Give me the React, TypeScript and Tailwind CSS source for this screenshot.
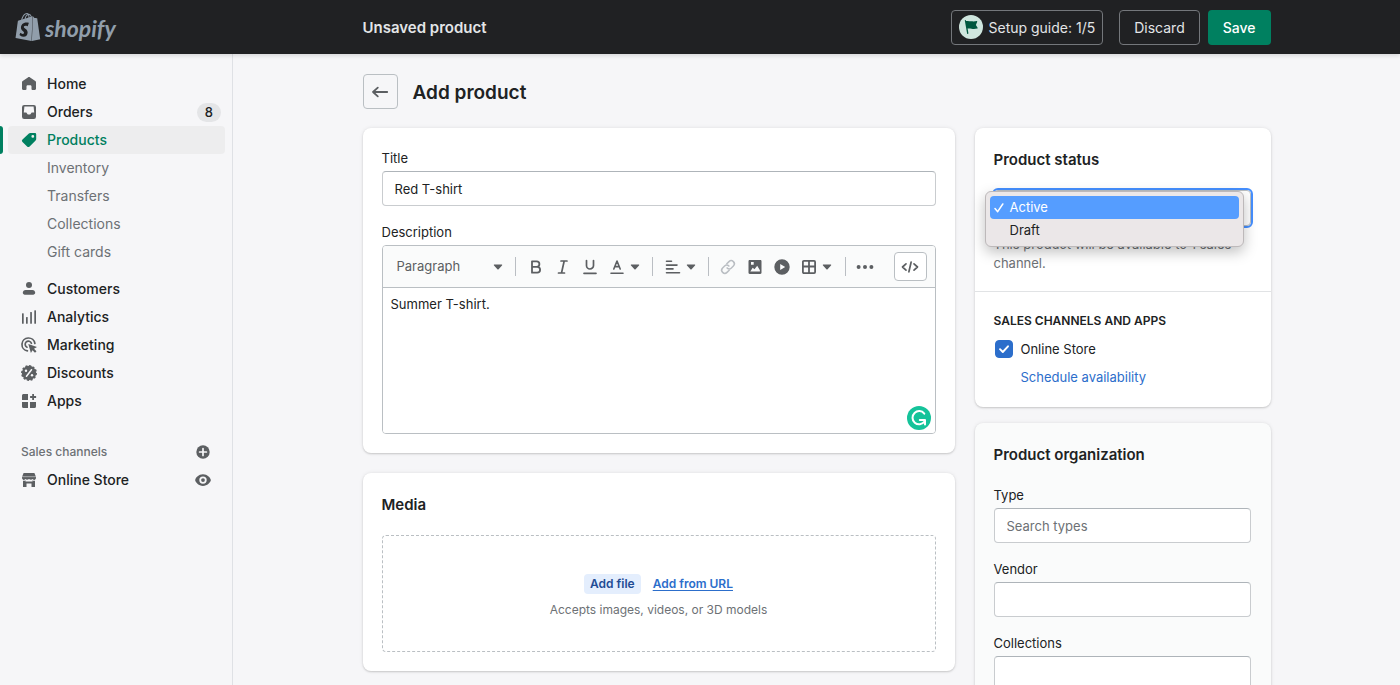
import { useState } from 'react'
import type { ReactNode } from 'react'
import { SiShopify } from 'react-icons/si'

type IconProps = { className?: string }

function Icon({ children, className = 'size-[18px]' }: { children: ReactNode; className?: string }) {
  return (
    <svg viewBox="0 0 18 18" fill="currentColor" aria-hidden="true" className={`shrink-0 ${className}`}>
      {children}
    </svg>
  )
}

const HomeIcon = () => (
  <Icon>
    <path d="M9 2c.4 0 .8.1 1.1.4L15.3 6c.5.3.7.8.7 1.3v6.5c0 .7-.5 1.2-1.2 1.2h-2.4c-.5 0-.9-.4-.9-.9v-2.6c0-.8-.6-1.3-1.3-1.3H7.8c-.7 0-1.3.5-1.3 1.3v2.6c0 .5-.4.9-.9.9H3.2C2.5 15 2 14.5 2 13.8V7.3c0-.5.2-1 .7-1.3l5.2-3.6C8.2 2.1 8.6 2 9 2z" />
  </Icon>
)

const OrdersIcon = () => (
  <Icon>
    <path
      fillRule="evenodd"
      d="M4.2 2h9.6A2.2 2.2 0 0 1 16 4.2v9.6a2.2 2.2 0 0 1-2.2 2.2H4.2A2.2 2.2 0 0 1 2 13.8V4.2A2.2 2.2 0 0 1 4.2 2zm.2 1.6-.6 6H6c.5 0 .8.3 1 .8.2.6.7 1 1.3 1h1.4c.6 0 1.1-.4 1.3-1 .2-.5.5-.8 1-.8h2.2l-.6-6z"
    />
  </Icon>
)

const ProductsIcon = () => (
  <Icon>
    <path
      fillRule="evenodd"
      d="M10.2 2H15a1.2 1.2 0 0 1 1.2 1.2V8c0 .5-.2 1-.6 1.4l-6 6a1.8 1.8 0 0 1-2.5 0L2.5 11a1.8 1.8 0 0 1 0-2.6L8.9 2.5c.4-.3.8-.5 1.3-.5zm2.6 2a1.4 1.4 0 1 0 0 2.8 1.4 1.4 0 0 0 0-2.8z"
    />
  </Icon>
)

const CustomersIcon = () => (
  <Icon>
    <circle cx="9" cy="4.9" r="3" />
    <path d="M5.6 9.9h6.8c1.6 0 2.8 1.2 2.8 2.7 0 1.3-.8 2.1-2 2.1H4.8c-1.2 0-2-.8-2-2.1 0-1.5 1.2-2.7 2.8-2.7z" />
  </Icon>
)

const AnalyticsIcon = () => (
  <Icon>
    <rect x="2" y="5.3" width="1.7" height="10.4" rx=".5" />
    <rect x="6" y="9" width="1.7" height="6.7" rx=".5" />
    <rect x="10.2" y="4" width="1.7" height="11.7" rx=".5" />
    <rect x="14.3" y="2.2" width="1.7" height="13.5" rx=".5" />
  </Icon>
)

const MarketingIcon = () => (
  <Icon>
    <g fill="none" stroke="currentColor" strokeWidth="1.7" strokeLinecap="round">
      <path d="M7.4 14.9A6.5 6.5 0 1 1 14.9 7.5" />
      <path d="M7 11.2a3.2 3.2 0 1 1 4.4-3.9" />
    </g>
    <path d="M8.3 8.1 17 10.9 14 12.7 16.5 15.2 15 16.7 12.5 14.2 10.9 17z" />
  </Icon>
)

const DiscountsIcon = () => (
  <Icon>
    <circle cx="9" cy="9" r="7.2" />
    <circle cx="9" cy="9" r="7.1" fill="none" stroke="currentColor" strokeWidth="1.7" strokeDasharray="2.1 1.6" />
    <path d="M6.5 12.3 11.5 5.7" stroke="#f6f6f8" strokeWidth="1.5" strokeLinecap="round" />
    <circle cx="6" cy="6.8" r="1.2" fill="#f6f6f8" />
    <circle cx="12" cy="11.2" r="1.2" fill="#f6f6f8" />
  </Icon>
)

const AppsIcon = () => (
  <Icon>
    <path d="M3.6 2H8v5.9H2V3.6C2 2.7 2.7 2 3.6 2zM2 10h6v6H3.6A1.6 1.6 0 0 1 2 14.4zM10 10h6v4.4a1.6 1.6 0 0 1-1.6 1.6H10z" />
    <path d="M13.1 2v6M10.1 5h6" stroke="currentColor" strokeWidth="1.8" />
  </Icon>
)

const StoreIcon = () => (
  <Icon>
    <path d="M3.6 2h10.8L16 6v.8a2 2 0 0 1-1.2 1.9c-.9.4-1.8.1-2.3-.6-.8.9-2.3.9-3.5-.1-1.2 1-2.7 1-3.5.1-.5.7-1.4 1-2.3.6A2 2 0 0 1 2 6.8V6z" />
    <path d="M3 9.7c1 .2 1.8 0 2.5-.5v1.3h7V9.2c.7.5 1.5.7 2.5.5V16h-3.5v-3.5h-5V16H3z" />
    <path d="M2 5.7h14" stroke="#f6f6f8" strokeWidth=".5" />
  </Icon>
)

const EyeIcon = () => (
  <Icon>
    <path
      fillRule="evenodd"
      d="M9 3.300c4.500 0 7.100 3.400 7.700 5.100.2.500.2.900 0 1.400-.6 1.700-3.200 5.100-7.700 5.100S1.900 11.500 1.300 9.800a2 2 0 0 1 0-1.400C1.900 6.700 4.500 3.300 9 3.300zm0 2.100a3.700 3.700 0 1 0 0 7.400 3.700 3.700 0 0 0 0-7.400z"
    />
    <circle cx="9" cy="9.1" r="1.9" />
  </Icon>
)

const PlusIcon = () => (
  <Icon>
    <circle cx="9" cy="9" r="6.7" />
    <path d="M9 5.6v6.8M5.6 9h6.8" stroke="#f6f6f8" strokeWidth="1.7" strokeLinecap="round" />
  </Icon>
)

const Caret = ({ className = '' }: IconProps) => (
  <svg viewBox="0 0 10 6" fill="currentColor" aria-hidden="true" className={`h-[6px] w-[10px] shrink-0 ${className}`}>
    <path d="M1.4.5h7.2c.6 0 .8.6.4 1L5.6 5.2a.8.8 0 0 1-1.2 0L1 1.5C.6 1.1.8.5 1.4.5z" />
  </svg>
)

const navItems = [
  { label: 'Home', icon: <HomeIcon /> },
  { label: 'Orders', icon: <OrdersIcon />, badge: 8 },
  {
    label: 'Products',
    icon: <ProductsIcon />,
    active: true,
    children: ['Inventory', 'Transfers', 'Collections', 'Gift cards'],
  },
  { label: 'Customers', icon: <CustomersIcon /> },
  { label: 'Analytics', icon: <AnalyticsIcon /> },
  { label: 'Marketing', icon: <MarketingIcon /> },
  { label: 'Discounts', icon: <DiscountsIcon /> },
  { label: 'Apps', icon: <AppsIcon /> },
]

function Sidebar() {
  return (
    <nav className="w-[233px] shrink-0 border-r border-[#dfe1e5] pt-4 text-[14px] font-medium leading-5 text-[#5c5f62]">
      <ul>
        {navItems.map((item) => (
          <li key={item.label} className={item.children ? 'mb-[9px]' : ''}>
            <div className="relative pl-2 pr-[7px]">
              {item.active && <span className="absolute inset-y-0 left-0 w-[3px] rounded-r bg-[#008060]" />}
              <a
                href="#"
                className={`flex h-7 items-center gap-[9px] rounded pl-3 pr-1 ${
                  item.active ? 'bg-[#ededee] text-[#008060]' : ''
                }`}
              >
                {item.icon}
                <span className={item.active ? '' : 'text-[#202223]'}>{item.label}</span>
                {item.badge && (
                  <span className="ml-auto rounded-full bg-[#e4e5e7] px-2 text-[13px] leading-[19px] text-[#202223]">
                    {item.badge}
                  </span>
                )}
              </a>
            </div>
            {item.children && (
              <ul>
                {item.children.map((child) => (
                  <li key={child}>
                    <a href="#" className="flex h-7 items-center pl-[47px] font-normal text-[#6d7175]">
                      {child}
                    </a>
                  </li>
                ))}
              </ul>
            )}
          </li>
        ))}
      </ul>
      <div className="mt-[23px] flex h-7 items-center justify-between pl-[21px] pr-5">
        <h2 className="text-[12px] text-[#6d7175]">Sales channels</h2>
        <button type="button" aria-label="Add sales channel">
          <PlusIcon />
        </button>
      </div>
      <div className="flex h-7 items-center justify-between pl-5 pr-5">
        <a href="#" className="flex items-center gap-[9px]">
          <StoreIcon />
          <span className="text-[#202223]">Online Store</span>
        </a>
        <button type="button" aria-label="View your online store">
          <EyeIcon />
        </button>
      </div>
    </nav>
  )
}

function Header() {
  return (
    <header className="relative flex h-[54px] shrink-0 bg-[#202123] text-[#e3e5e7] shadow-[0_2px_4px_rgba(0,0,0,0.12)]">
      <a href="#" className="flex w-[233px] shrink-0 items-center gap-[3px] pl-[14px] text-[#919eab]">
        <SiShopify className="size-7" aria-hidden="true" />
        <span className="pt-0.5 font-[Lato,'Noto_Sans',sans-serif] text-[23px] font-bold italic leading-7">shopify</span>
      </a>
      <div className="flex flex-1 items-center">
        <div className="mx-auto flex w-full max-w-[908px] items-center">
          <p className="pt-0.5 text-[15px] font-semibold leading-5">Unsaved product</p>
          <button
            type="button"
            className="ml-auto flex h-[35px] items-center gap-[5px] rounded border border-[#74777b] px-[7px] text-[14px]"
          >
            <svg viewBox="0 0 24 24" className="size-6" aria-hidden="true">
              <circle cx="12" cy="12" r="12" fill="#cfe6de" />
              <path
                d="M5.8 5.6c-.1-.5.7-.8 1-.3l.2.7c2-.3 3.6 0 5.5.3 1.9.2 3.5.1 5.2-.3.5-.1.7.3.5.7l-1.3 3.2 1.7 2.8c.3.4 0 .8-.4.9-2.2.6-4 .5-5.7.2-1.4-.3-2.6-.5-3.9-.3l.8 4.8c0 .9-1.1 1-1.3.2z"
                fill="#00573f"
              />
            </svg>
            Setup guide: 1/5
          </button>
          <button type="button" className="ml-4 h-[35px] rounded border border-[#74777b] px-[14px] text-[14px]">
            Discard
          </button>
          <button type="button" className="ml-2 h-[35px] rounded bg-[#008060] px-[15px] text-[14px] font-medium text-white">
            Save
          </button>
        </div>
      </div>
    </header>
  )
}

function Card({ children, subdued }: { children: ReactNode; subdued?: boolean }) {
  return (
    <section
      className={`rounded-lg shadow-[0_0_4px_rgba(23,24,24,0.08),0_1px_2px_rgba(0,0,0,0.16)] ${
        subdued ? 'bg-[#fafbfb]' : 'bg-white'
      }`}
    >
      {children}
    </section>
  )
}

const inputClass =
  'block h-[35px] w-full rounded border border-[#c9cccf] border-t-[#aeb4b9] bg-white px-3 text-[#202223] placeholder:text-[#6d7175]'

function TextField({ id, label, value, placeholder }: { id: string; label: string; value?: string; placeholder?: string }) {
  return (
    <div>
      <label htmlFor={id} className="mb-[3px] block w-fit leading-5">
        {label}
      </label>
      <input id={id} type="text" defaultValue={value} placeholder={placeholder} className={inputClass} />
    </div>
  )
}

const Divider = () => <span className="h-[19px] w-px bg-[#babec3]" />

function Tool({ label, children, className = '' }: { label: string; children: ReactNode; className?: string }) {
  return (
    <button type="button" aria-label={label} className={`flex h-7 items-center ${className}`}>
      {children}
    </button>
  )
}

function EditorToolbar() {
  return (
    <div className="flex h-[42px] items-center border-b border-[#babfc3] bg-[#fafbfb] pr-2 text-[#5c5f62]">
      <div className="relative flex items-center">
        <select
          aria-label="Formatting"
          className="h-7 w-[132px] appearance-none bg-transparent pl-[14px]"
          defaultValue="Paragraph"
        >
          <option>Paragraph</option>
          <option>Heading 1</option>
          <option>Heading 2</option>
        </select>
        <Caret className="pointer-events-none absolute right-[12px]" />
      </div>
      <Divider />
      <Tool label="Bold" className="ml-[11px]">
        <Icon>
          <path
            d="M5 3.3h4.6a2.8 2.8 0 0 1 0 5.6H5zM5 8.9h5.2a2.9 2.9 0 0 1 0 5.8H5z"
            fill="none"
            stroke="currentColor"
            strokeWidth="1.8"
            strokeLinejoin="round"
          />
        </Icon>
      </Tool>
      <Tool label="Italic" className="ml-[9px]">
        <Icon>
          <path
            d="M7 3h6M4.5 15h6M10.2 3 7.5 15"
            fill="none"
            stroke="currentColor"
            strokeWidth="1.7"
            strokeLinecap="round"
          />
        </Icon>
      </Tool>
      <Tool label="Underline" className="ml-[9px]">
        <Icon>
          <path
            d="M5.5 2.5v5a3.5 3.5 0 0 0 7 0v-5M3 15.3h12"
            fill="none"
            stroke="currentColor"
            strokeWidth="1.7"
            strokeLinecap="round"
          />
        </Icon>
      </Tool>
      <Tool label="Color" className="ml-[9px] gap-1">
        <Icon>
          <path
            d="M5.8 11 9 3l3.2 8M6.8 8.6h4.4M3 15.3h12"
            fill="none"
            stroke="currentColor"
            strokeWidth="1.6"
            strokeLinecap="round"
            strokeLinejoin="round"
          />
        </Icon>
        <Caret />
      </Tool>
      <span className="w-[12px]" />
      <Divider />
      <Tool label="Alignment" className="ml-[11px] gap-1">
        <Icon>
          <path
            d="M2.5 3.3h5M2.5 7.1h10.5M2.5 10.9h6.5M2.5 14.7h13"
            stroke="currentColor"
            strokeWidth="1.6"
            strokeLinecap="round"
          />
        </Icon>
        <Caret />
      </Tool>
      <span className="w-[12px]" />
      <Divider />
      <Tool label="Insert link" className="ml-[10px] text-[#babec3]">
        <Icon>
          <g
            transform="rotate(-45 9 9)"
            fill="none"
            stroke="currentColor"
            strokeWidth="1.5"
            strokeLinecap="round"
          >
            <path d="M7.6 12.1H4.5a3.1 3.1 0 0 1 0-6.2h2.8a3.1 3.1 0 0 1 3 3.1" />
            <path d="M10.4 5.9h3.1a3.1 3.1 0 0 1 0 6.2h-2.8a3.1 3.1 0 0 1-3-3.1" />
          </g>
        </Icon>
      </Tool>
      <Tool label="Insert image" className="ml-[9px]">
        <Icon>
          <path
            fillRule="evenodd"
            d="M3.7 2h10.6c.7 0 1.2.5 1.2 1.2v11.6c0 .7-.5 1.2-1.2 1.2H3.7c-.7 0-1.2-.5-1.2-1.2V3.2c0-.7.5-1.2 1.2-1.2zM5 4v2.7h2.7V4zM4.3 13.5h9.6v-1.3L11.2 7.7 8.5 11.3 6.7 9.7z"
          />
        </Icon>
      </Tool>
      <Tool label="Insert video" className="ml-[9px]">
        <Icon>
          <path fillRule="evenodd" d="M9 1.3a7.7 7.7 0 1 0 0 15.4A7.7 7.7 0 0 0 9 1.3zM7.2 6v6l5-3z" />
        </Icon>
      </Tool>
      <Tool label="Insert table" className="ml-[9px] gap-1">
        <Icon>
          <path
            d="M3.9 2.9h10.2c.6 0 1 .4 1 1v10.2c0 .6-.4 1-1 1H3.9c-.6 0-1-.4-1-1V3.9c0-.6.4-1 1-1zM9 3v12M3 8.5h12"
            fill="none"
            stroke="currentColor"
            strokeWidth="1.8"
          />
        </Icon>
        <Caret />
      </Tool>
      <span className="w-[13px]" />
      <Divider />
      <Tool label="More" className="ml-[10px]">
        <Icon>
          <circle cx="2.6" cy="9" r="2" />
          <circle cx="9" cy="9" r="2" />
          <circle cx="15.4" cy="9" r="2" />
        </Icon>
      </Tool>
      <button
        type="button"
        aria-label="Show HTML"
        className="ml-auto flex h-[29px] w-[33px] items-center justify-center rounded border border-[#babfc3] bg-white"
      >
        <Icon>
          <path
            d="M5 5.8 1.5 9 5 12.2M13 5.8 16.5 9 13 12.2M10.1 4.2 7.9 13.8"
            fill="none"
            stroke="currentColor"
            strokeWidth="1.7"
            strokeLinecap="round"
            strokeLinejoin="round"
          />
        </Icon>
      </button>
    </div>
  )
}

function StatusSelect() {
  const [status, setStatus] = useState('Active')

  return (
    <div className="relative mt-[18px]">
      <select
        aria-label="Product status"
        value={status}
        onChange={(e) => setStatus(e.target.value)}
        className="block h-[36px] w-full appearance-none rounded border border-[#babfc3] bg-white px-3 outline-2 outline-[#458fff]"
      >
        <option>Active</option>
        <option>Draft</option>
      </select>
      <ul
        role="listbox"
        aria-label="Product status options"
        className="absolute -left-[9px] right-[7px] top-px rounded-md border border-[#bdb9ba] bg-[#ebe7e8] p-1 text-[13px] shadow-[0_5px_14px_rgba(0,0,0,0.25)]"
      >
        {['Active', 'Draft'].map((option) => (
          <li
            key={option}
            role="option"
            aria-selected={option === status}
            onClick={() => setStatus(option)}
            className={`flex h-[23px] items-center rounded pl-1 ${
              option === status ? 'bg-[#559dff] text-white' : 'text-[#202223]'
            }`}
          >
            <span className="w-4">
              {option === status && (
                <svg viewBox="0 0 10 10" className="size-[10px]" aria-hidden="true">
                  <path
                    d="M1 5.5 3.7 8.7 8.8 1"
                    fill="none"
                    stroke="currentColor"
                    strokeWidth="1.5"
                    strokeLinecap="round"
                    strokeLinejoin="round"
                  />
                </svg>
              )}
            </span>
            {option}
          </li>
        ))}
      </ul>
    </div>
  )
}

export default function App() {
  return (
    <div className="flex h-screen flex-col overflow-hidden bg-[#f6f6f8] font-[Inter,'Liberation_Sans',sans-serif] text-[#202223]">
      <Header />
      <div className="flex min-h-0 flex-1">
        <Sidebar />
        <main className="flex-1 overflow-y-auto text-[13px] [scrollbar-width:none]">
          <div className="mx-auto max-w-[908px] pb-10 pt-5">
            <div className="mb-[19px] flex items-center gap-[15px]">
              <button
                type="button"
                aria-label="Back"
                className="flex size-[35px] items-center justify-center rounded border border-[#babfc3] text-[#5c5f62]"
              >
                <Icon>
                  <path
                    d="M6.8 4.6 2 9l4.8 4.4M2.2 9h14"
                    fill="none"
                    stroke="currentColor"
                    strokeWidth="1.8"
                    strokeLinecap="round"
                    strokeLinejoin="round"
                  />
                </Icon>
              </button>
              <h1 className="pt-0.5 text-[19px] font-semibold leading-6">Add product</h1>
            </div>

            <div className="flex items-start gap-5">
              <div className="flex min-w-0 flex-[2] flex-col gap-5">
                <Card>
                  <div className="flex flex-col gap-4 p-[19px] pt-5">
                    <TextField id="title" label="Title" value="Red T-shirt" />
                    <div>
                      <label htmlFor="description" className="mb-[3px] block w-fit leading-5">
                        Description
                      </label>
                      <div className="relative overflow-hidden rounded border border-[#babfc3]">
                        <EditorToolbar />
                        <textarea
                          id="description"
                          defaultValue="Summer T-shirt."
                          className="block h-[145px] w-full resize-none bg-white px-2 py-[6px] leading-5"
                        />
                        <svg viewBox="0 0 24 24" className="absolute bottom-[3px] right-1 size-6" aria-hidden="true">
                          <circle cx="12" cy="12" r="12" fill="#15c39a" />
                          <path
                            d="M17.3 7.6A6.6 6.6 0 1 0 17.5 15.5M12.8 14H18v4.6"
                            fill="none"
                            stroke="#fff"
                            strokeWidth="2"
                            strokeLinecap="round"
                            strokeLinejoin="round"
                          />
                        </svg>
                      </div>
                    </div>
                  </div>
                </Card>

                <Card>
                  <div className="p-[19px] pt-5">
                    <h2 className="text-[15px] font-semibold leading-6">Media</h2>
                    <div className="mt-[18px] flex h-[117px] flex-col items-center justify-center gap-[6px] rounded border border-dashed border-[#babfc3]">
                      <div className="flex items-center gap-3 pt-[6px] text-[12px] font-semibold">
                        <button type="button" className="rounded bg-[#e4eefd] px-[6px] leading-5 text-[#1f4b94]">
                          Add file
                        </button>
                        <a href="#" className="text-[#2c6ecb] underline underline-offset-2">
                          Add from URL
                        </a>
                      </div>
                      <p className="text-[12px] leading-5 text-[#6d7175]">Accepts images, videos, or 3D models</p>
                    </div>
                  </div>
                </Card>
              </div>

              <div className="flex min-w-0 flex-1 flex-col gap-4">
                <Card>
                  <div className="pb-[18px] pl-[19px] pr-5 pt-5">
                    <h2 className="text-[15px] font-semibold leading-6">Product status</h2>
                    <StatusSelect />
                    <p className="mt-[9px] leading-[19px] text-[#6d7175]">
                      This product will be available to 1 sales channel.
                    </p>
                  </div>
                  <div className="border-t border-[#e1e3e5] pb-5 pl-[19px] pr-5 pt-[19px]">
                    <h3 className="text-[12px] font-semibold uppercase leading-[19px]">Sales channels and apps</h3>
                    <label className="mt-[9px] flex items-center gap-2 leading-5">
                      <span className="relative ml-px flex size-[18px]">
                        <input
                          type="checkbox"
                          defaultChecked
                          className="peer size-[18px] appearance-none rounded border border-[#8c9196] bg-white checked:border-[#2c6ecb] checked:bg-[#2c6ecb]"
                        />
                        <svg
                          viewBox="0 0 18 18"
                          className="pointer-events-none absolute inset-0 hidden peer-checked:block"
                          aria-hidden="true"
                        >
                          <path
                            d="M5 9.2 7.8 12 13 6.3"
                            fill="none"
                            stroke="#fff"
                            strokeWidth="1.9"
                            strokeLinecap="round"
                            strokeLinejoin="round"
                          />
                        </svg>
                      </span>
                      Online Store
                    </label>
                    <a href="#" className="ml-[27px] mt-2 block w-fit leading-5 text-[#2c6ecb]">
                      Schedule availability
                    </a>
                  </div>
                </Card>

                <Card subdued>
                  <div className="py-5 pl-[19px] pr-5">
                    <h2 className="mb-[18px] text-[15px] font-semibold leading-6">Product organization</h2>
                    <div className="flex flex-col gap-4">
                      <TextField id="type" label="Type" placeholder="Search types" />
                      <TextField id="vendor" label="Vendor" />
                      <TextField id="collections" label="Collections" />
                    </div>
                  </div>
                </Card>
              </div>
            </div>
          </div>
        </main>
      </div>
    </div>
  )
}
